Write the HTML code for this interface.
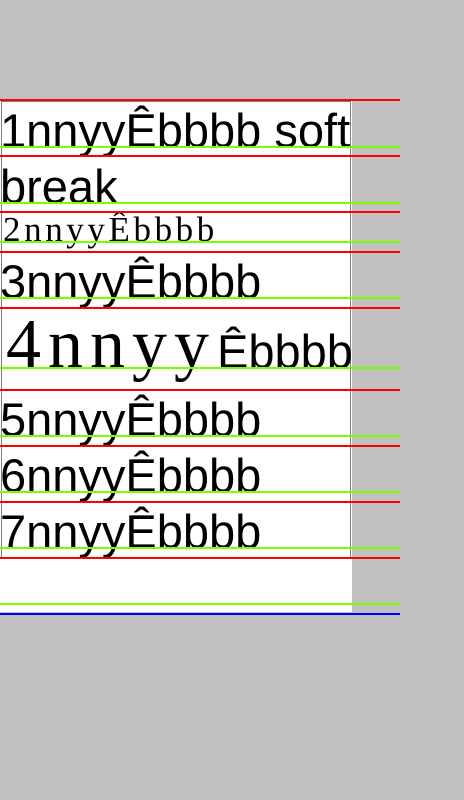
<!DOCTYPE html>
<html><head><meta charset="utf-8"><style>
html,body{margin:0;padding:0;width:464px;height:800px;background:#c0c0c0;overflow:hidden;position:relative}
.w{position:absolute;left:0;top:100px;width:352px;height:512px;background:#fff}
.box{position:absolute;left:1px;top:101px;width:348px;height:455px;border:1px solid #808080}
.l{position:absolute;left:0;width:400px;height:2px}
.r{background:#f00}.g{background:#7f0}.b{background:#00f}
.s{position:absolute;font-family:"Liberation Sans",sans-serif;font-size:47px;line-height:1.117;white-space:nowrap;color:#000}
.m{position:absolute;font-family:"Liberation Serif",serif;line-height:1.107;white-space:nowrap;color:#000}
</style></head><body>
<div class="w"></div><div class="box"></div>
<div class="s" style="left:0;top:105px">1nnyyÊbbbb soft</div>
<div class="s" style="left:0;top:161px">break</div>
<div class="m" style="left:3px;top:211px;font-size:35px;letter-spacing:3.6px">2nnyyÊbbbb</div>
<div class="s" style="left:0;top:256px">3nnyyÊbbbb</div>
<div class="m" style="left:6px;top:306px;font-size:70px;letter-spacing:7px">4nnyy</div>
<div class="s" style="left:217px;top:326px">Êbbbb</div>
<div class="s" style="left:0;top:394px">5nnyyÊbbbb</div>
<div class="s" style="left:0;top:450px">6nnyyÊbbbb</div>
<div class="s" style="left:0;top:506px">7nnyyÊbbbb</div>
<div class="l r" style="top:99px"></div>
<div class="l r" style="top:155px"></div>
<div class="l r" style="top:211px"></div>
<div class="l r" style="top:251px"></div>
<div class="l r" style="top:307px"></div>
<div class="l r" style="top:389px"></div>
<div class="l r" style="top:445px"></div>
<div class="l r" style="top:501px"></div>
<div class="l r" style="top:557px"></div>
<div class="l g" style="top:146px"></div>
<div class="l g" style="top:202px"></div>
<div class="l g" style="top:241px"></div>
<div class="l g" style="top:297px"></div>
<div class="l g" style="top:367px"></div>
<div class="l g" style="top:435px"></div>
<div class="l g" style="top:491px"></div>
<div class="l g" style="top:547px"></div>
<div class="l g" style="top:603px"></div>
<div class="l b" style="top:613px"></div>
</body></html>
